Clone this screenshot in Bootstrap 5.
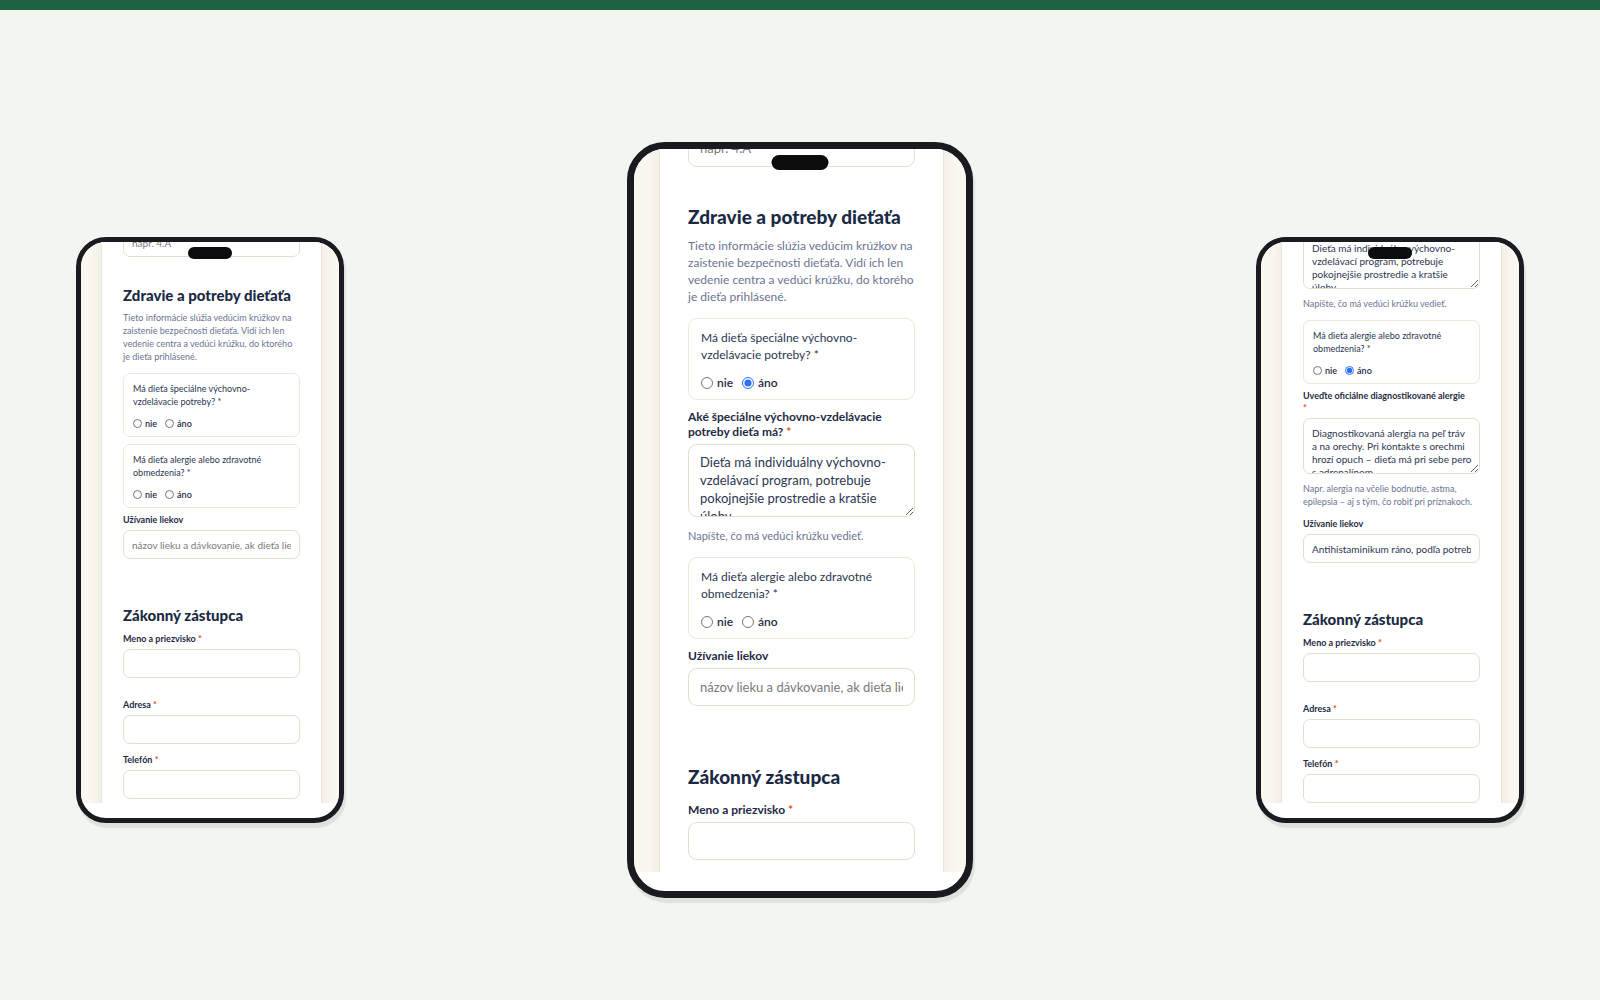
<!DOCTYPE html>
<html lang="sk">
<head>
<meta charset="utf-8">
<meta name="viewport" content="width=device-width, initial-scale=1">
<title>Zdravie a potreby dieťaťa</title>
<link href="https://cdn.jsdelivr.net/npm/bootstrap@5.3.0/dist/css/bootstrap.min.css" rel="stylesheet">
<style>
  body { background: #f3f5f0; color: #1f2a44; font-family: Lato, "Open Sans", sans-serif; }
  .topbar { height: 10px; background: #1e6143; }
  .stage { padding: 30px 76px 0; min-height: calc(100vh - 10px); }

  /* phone frames: the large one and the compact one share all rules, only the scale set differs */
  .phone {
    --w: 346px; --h: 756px; --frame: 7px; --radius: 38px; --foot: 19px;
    --notch-w: 57px; --notch-h: 15px; --notch-top: 6px;
    --side-l: 25px; --side-r: 22px; --pad: 28px; --corner: 9px;
    --fs: 12px; --lh: 17px; --lh-area: 18px; --fs-input: 13px; --fs-help: 11px; --fs-title: 19px; --lh-title: 24px; --lh-label: 15px;
    --input-h: 38px; --area-h: 73px; --area-pad: 8px; --in-x: 11px; --box-x: 12px;
    --box-top: 10px; --box-bottom: 8px; --radio: 12px; --radio-gap: 4px; --opt-gap: 9px; --opt-top: 11px;
    --s-label: 9px; --s-input: 5px; --s-title: 59px; --s-para: 8px; --s-box: 13px; --s-ask: 11px; --s-help: 10px;
    --s-first: 13px; --s-next: 13px; --s-wide: 26px; --s-top: 38px; --scroll: -20px;
    width: var(--w); height: var(--h);
    border: var(--frame) solid #191b20; border-radius: var(--radius);
    background: #fff; box-shadow: 2px 5px 1px #dfe1dc;
    padding-bottom: var(--foot);
  }
  .phone-sm {
    --w: 268px; --h: 586px; --frame: 5px; --radius: 30px; --foot: 15px;
    --notch-w: 44px; --notch-h: 12px; --notch-top: 5px;
    --side-l: 20px; --side-r: 17px; --pad: 21px; --corner: 7px;
    --fs: 9px; --lh: 13px; --lh-area: 13px; --fs-input: 10px; --fs-help: 9px; --fs-title: 15px; --lh-title: 18px; --lh-label: 12px;
    --input-h: 29px; --area-h: 56px; --area-pad: 8px; --in-x: 8px; --box-x: 9px;
    --box-top: 8px; --box-bottom: 6px; --radio: 9px; --radio-gap: 3px; --opt-gap: 8px; --opt-top: 9px;
    --s-label: 6px; --s-input: 4px; --s-title: 47px; --s-para: 7px; --s-box: 10px; --s-ask: 7px; --s-help: 8px;
    --s-first: 9px; --s-next: 10px; --s-wide: 21px; --s-top: 29px; --scroll: -14px;
    margin-top: 20px;
  }
  .notch { top: var(--notch-top); width: var(--notch-w); height: var(--notch-h); background: #0b0c0e; border-radius: 8px; z-index: 2; }
  .screen { background: #faf7f0; padding: 0 var(--side-r) 0 var(--side-l); }
  .sheet { display: flow-root; background: #fff; border: solid #ece5da; border-width: 0 1px; padding: 0 var(--pad) 60px; box-shadow: 0 0 14px rgba(60, 45, 30, .08); }

  .sheet h2 { font-size: var(--fs-title); line-height: var(--lh-title); font-weight: 900; color: #1b2a44; margin: var(--s-title) 0 0; white-space: nowrap; }
  .sheet p { font-size: var(--fs); line-height: var(--lh); margin: 0; }
  .sheet .ask p { color: #2b3650; }
  .intro { color: #6b7490; }
  .sheet h2 + .intro { margin-top: var(--s-para); }
  .help-line { color: #6b7490; }
  .sheet .help-line { font-size: var(--fs-help); margin-top: var(--s-help); }
  .ask { border: 1px solid #eee8dc; border-radius: var(--corner); padding: var(--box-top) var(--box-x) var(--box-bottom); margin-top: var(--s-box); }
  .ask + .ask { margin-top: var(--s-ask); }
  .options { gap: var(--opt-gap); margin-top: var(--opt-top); }
  .options label { gap: var(--radio-gap); font-size: var(--fs); line-height: var(--lh); font-weight: 600; }
  .options input { width: var(--radio); height: var(--radio); margin: 0; accent-color: #2a6ff5; }
  .field { margin-top: var(--s-label); }
  .sheet h2 + .field { margin-top: var(--s-first); }
  .field-next { margin-top: var(--s-next); }
  .field-wide { margin-top: var(--s-wide); }
  .field > label { display: block; font-size: var(--fs); line-height: var(--lh-label); font-weight: 700; margin-bottom: var(--s-input); }
  .req { color: #e2502f; font-weight: 900; }
  .entry { display: block; width: 100%; height: var(--input-h); border: 1px solid #e4dece; border-radius: var(--corner); background: #fff; color: #2b3650; font-size: var(--fs-input); line-height: var(--lh); padding: 0 var(--in-x); }
  .entry::placeholder { color: #7a7a7a; }
  textarea.entry { height: var(--area-h); line-height: var(--lh-area); padding-top: var(--area-pad); padding-right: 2px; overflow: hidden; resize: vertical; }

  /* scroll position of each form */
  .scroll-a { margin-top: var(--scroll); }
  .scroll-b { margin-top: -9px; }
  .sheet .scroll-a + h2 { margin-top: var(--s-top); }
</style>
</head>
<body>
<header class="topbar"></header>
<main class="stage d-flex justify-content-between align-items-center">

  <section class="phone phone-sm position-relative flex-shrink-0 overflow-hidden">
    <div class="notch position-absolute start-50 translate-middle-x"></div>
    <div class="screen h-100 overflow-hidden">
      <form class="sheet">
        <input class="entry scroll-a" type="text" placeholder="napr. 4.A" aria-label="Trieda">
        <h2>Zdravie a potreby dieťaťa</h2>
        <p class="intro">Tieto informácie slúžia vedúcim krúžkov na zaistenie bezpečnosti dieťaťa. Vidí ich len vedenie centra a vedúci krúžku, do ktorého je dieťa prihlásené.</p>
        <div class="ask" role="radiogroup" aria-labelledby="a-q1">
          <p id="a-q1">Má dieťa špeciálne výchovno-<br>vzdelávacie potreby? *</p>
          <div class="options d-flex">
            <label class="d-flex align-items-center"><input type="radio" name="a1">nie</label>
            <label class="d-flex align-items-center"><input type="radio" name="a1">áno</label>
          </div>
        </div>
        <div class="ask" role="radiogroup" aria-labelledby="a-q2">
          <p id="a-q2">Má dieťa alergie alebo zdravotné obmedzenia? *</p>
          <div class="options d-flex">
            <label class="d-flex align-items-center"><input type="radio" name="a2">nie</label>
            <label class="d-flex align-items-center"><input type="radio" name="a2">áno</label>
          </div>
        </div>
        <div class="field"><label for="a-med">Užívanie liekov</label><input class="entry" id="a-med" type="text" placeholder="názov lieku a dávkovanie, ak dieťa lieky užíva"></div>
        <h2>Zákonný zástupca</h2>
        <div class="field"><label for="a-name">Meno a priezvisko <span class="req">*</span></label><input class="entry" id="a-name" type="text"></div>
        <div class="field field-wide"><label for="a-adr">Adresa <span class="req">*</span></label><input class="entry" id="a-adr" type="text"></div>
        <div class="field field-next"><label for="a-tel">Telefón <span class="req">*</span></label><input class="entry" id="a-tel" type="tel"></div>
      </form>
    </div>
  </section>

  <section class="phone position-relative flex-shrink-0 overflow-hidden">
    <div class="notch position-absolute start-50 translate-middle-x"></div>
    <div class="screen h-100 overflow-hidden">
      <form class="sheet">
        <input class="entry scroll-a" type="text" placeholder="napr. 4.A" aria-label="Trieda">
        <h2>Zdravie a potreby dieťaťa</h2>
        <p class="intro">Tieto informácie slúžia vedúcim krúžkov na zaistenie bezpečnosti dieťaťa. Vidí ich len vedenie centra a vedúci krúžku, do ktorého je dieťa prihlásené.</p>
        <div class="ask" role="radiogroup" aria-labelledby="b-q1">
          <p id="b-q1">Má dieťa špeciálne výchovno-<br>vzdelávacie potreby? *</p>
          <div class="options d-flex">
            <label class="d-flex align-items-center"><input type="radio" name="b1">nie</label>
            <label class="d-flex align-items-center"><input type="radio" name="b1" checked>áno</label>
          </div>
        </div>
        <div class="field"><label for="b-need">Aké špeciálne výchovno-vzdelávacie<br>potreby dieťa má? <span class="req">*</span></label>
          <textarea class="entry" id="b-need">Dieťa má individuálny výchovno-vzdelávací program, potrebuje pokojnejšie prostredie a kratšie
úlohy.</textarea></div>
        <p class="help-line">Napíšte, čo má vedúci krúžku vedieť.</p>
        <div class="ask" role="radiogroup" aria-labelledby="b-q2">
          <p id="b-q2">Má dieťa alergie alebo zdravotné obmedzenia? *</p>
          <div class="options d-flex">
            <label class="d-flex align-items-center"><input type="radio" name="b2">nie</label>
            <label class="d-flex align-items-center"><input type="radio" name="b2">áno</label>
          </div>
        </div>
        <div class="field"><label for="b-med">Užívanie liekov</label><input class="entry" id="b-med" type="text" placeholder="názov lieku a dávkovanie, ak dieťa lieky užíva"></div>
        <h2>Zákonný zástupca</h2>
        <div class="field"><label for="b-name">Meno a priezvisko <span class="req">*</span></label><input class="entry" id="b-name" type="text"></div>
      </form>
    </div>
  </section>

  <section class="phone phone-sm position-relative flex-shrink-0 overflow-hidden">
    <div class="notch position-absolute start-50 translate-middle-x"></div>
    <div class="screen h-100 overflow-hidden">
      <form class="sheet">
        <textarea class="entry scroll-b" aria-label="Špeciálne potreby">Dieťa má individuálny výchovno-vzdelávací program, potrebuje pokojnejšie prostredie a kratšie
úlohy.</textarea>
        <p class="help-line">Napíšte, čo má vedúci krúžku vedieť.</p>
        <div class="ask" role="radiogroup" aria-labelledby="c-q2">
          <p id="c-q2">Má dieťa alergie alebo zdravotné obmedzenia? *</p>
          <div class="options d-flex">
            <label class="d-flex align-items-center"><input type="radio" name="c2">nie</label>
            <label class="d-flex align-items-center"><input type="radio" name="c2" checked>áno</label>
          </div>
        </div>
        <div class="field"><label for="c-al">Uveďte oficiálne diagnostikované alergie<br><span class="req">*</span></label>
          <textarea class="entry" id="c-al">Diagnostikovaná alergia na peľ tráv
a na orechy. Pri kontakte s orechmi
hrozí opuch – dieťa má pri sebe pero
s adrenalínom.</textarea></div>
        <p class="help-line">Napr. alergia na včelie bodnutie, astma, epilepsia – aj s tým, čo robiť pri príznakoch.</p>
        <div class="field field-next"><label for="c-med">Užívanie liekov</label><input class="entry" id="c-med" type="text" value="Antihistaminikum ráno, podľa potreby"></div>
        <h2>Zákonný zástupca</h2>
        <div class="field"><label for="c-name">Meno a priezvisko <span class="req">*</span></label><input class="entry" id="c-name" type="text"></div>
        <div class="field field-wide"><label for="c-adr">Adresa <span class="req">*</span></label><input class="entry" id="c-adr" type="text"></div>
        <div class="field field-next"><label for="c-tel">Telefón <span class="req">*</span></label><input class="entry" id="c-tel" type="tel"></div>
      </form>
    </div>
  </section>
</main>
<script src="https://cdn.jsdelivr.net/npm/bootstrap@5.3.0/dist/js/bootstrap.bundle.min.js"></script>
</body>
</html>
